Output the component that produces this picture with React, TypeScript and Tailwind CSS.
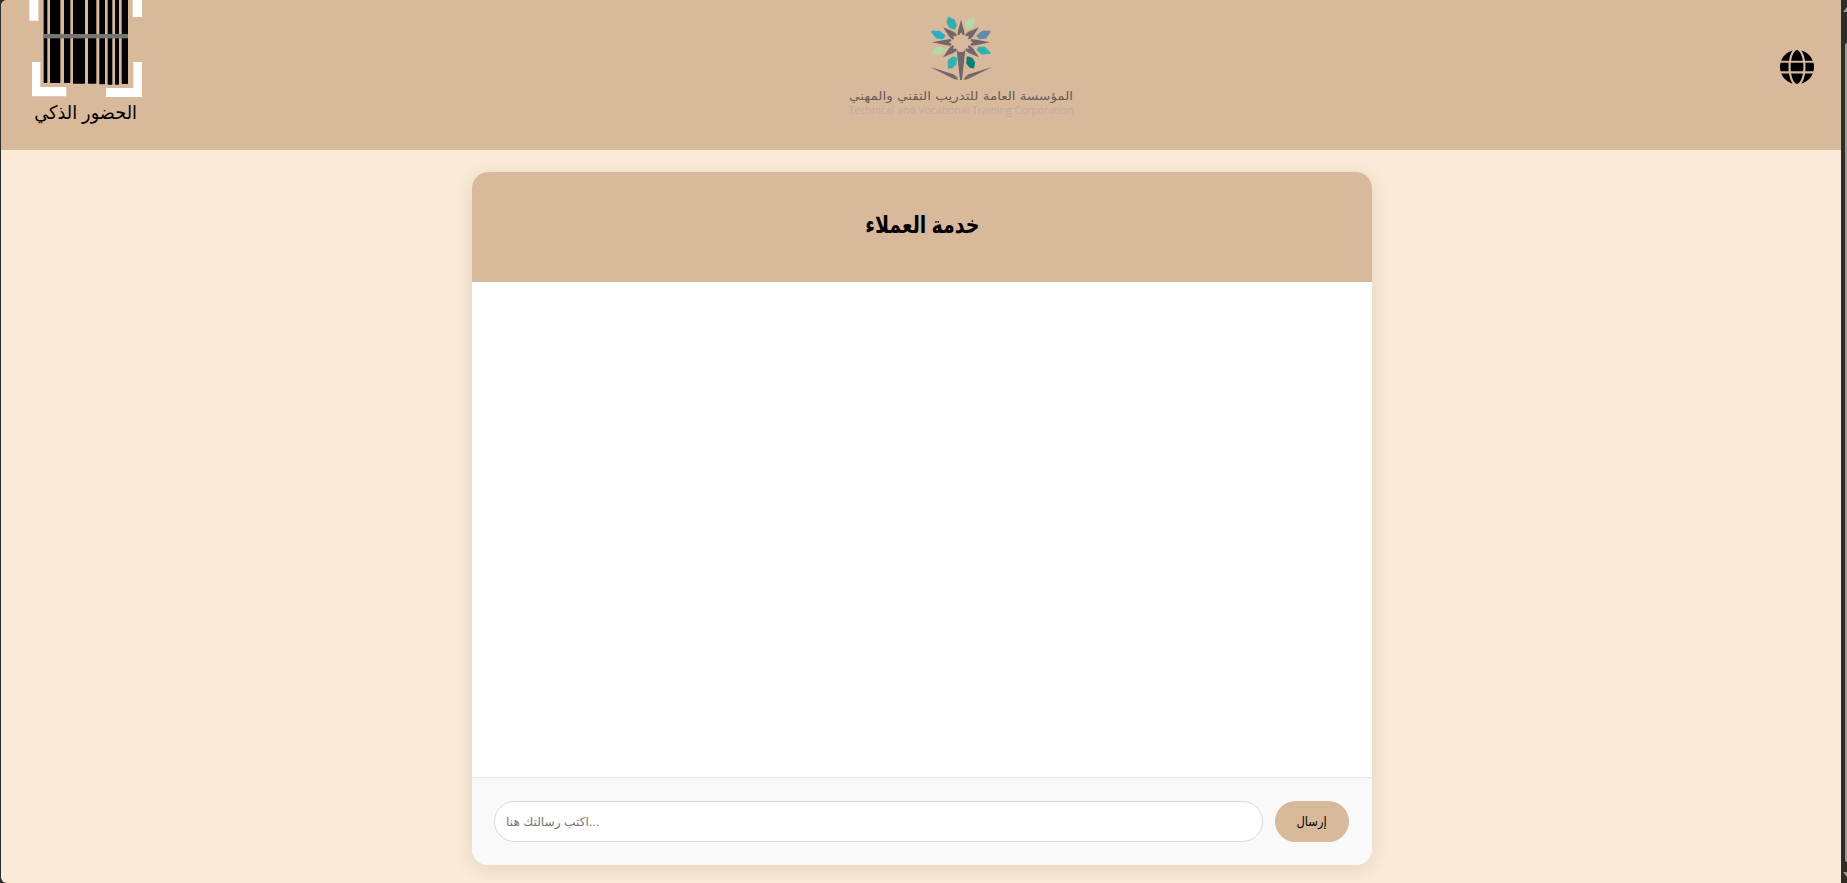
import { FaGlobe } from "react-icons/fa6";

const bars = [
  [131, 11, 249], [150, 31, 249], [192, 19, 249], [219, 36, 251], [264, 25, 251],
  [298, 17, 253], [323, 14, 254], [345, 12, 254], [365, 19, 252],
];

function AttendanceLogo() {
  return (
    <svg className="block h-[150px] w-[200px]" viewBox="0 0 600 450" role="img">
      {bars.map(([x, w, h]) => (
        <rect key={x} x={x} y={-6} width={w} height={h + 6} rx={2} fill="#000" />
      ))}
      <rect x={130} y={102} width={254} height={13} fill="#777574" />
      <g fill="#fff">
        <path d="M88 0h27v62H88zM398 0h28v51h-28z" />
        <path d="M96 186h25v75h78v28H96zM400 186h26v105H318v-27h82z" />
      </g>
      <text
        x={257} y={358} textAnchor="middle" direction="rtl" textLength={308}
        lengthAdjust="spacingAndGlyphs" fontSize={56}
        className="font-['Liberation_Sans','DejaVu_Sans',sans-serif]"
      >
        الحضور الذكي
      </text>
    </svg>
  );
}

function CorporationLogo() {
  return (
    <svg className="block h-[130px] w-[260px]" viewBox="0 0 780 390" role="img">
      <g transform="translate(285 36)" strokeWidth={5} strokeLinejoin="round">
        <path fill="#32b0b0" stroke="#32b0b0" d="M71 17l16 7 6 15-4 11-14-4-8-15z" />
        <path fill="#b5d8a9" stroke="#b5d8a9" d="M145 17l-16 7-6 15 4 11 13-4 7-15z" />
        <path fill="#28aec5" stroke="#28aec5" d="M21 59l22 0 16 13-7 7-17-2z" />
        <path fill="#5d8cae" stroke="#5d8cae" d="M194 59l-22 0-15 13 7 7 18-2z" />
        <path fill="#b5d8a9" stroke="#b5d8a9" d="M21 123l17-16 16 0 5 7-13 11z" />
        <path fill="#2bb2ad" stroke="#2bb2ad" d="M195 123l-17-16-16 0-4 7 13 11z" />
        <path fill="#2fb3b0" stroke="#2fb3b0" d="M71 167l0-22 13-9 9 2-1 18-12 11z" />
        <path fill="#087e78" stroke="#087e78" d="M145 167l3-15-7-12-13-5-2 19 9 11z" />
      </g>
      <g fill="#716768">
        {[0, 90, 270].map((angle) => (
          <path
            key={angle}
            d={
              angle === 0
                ? "M393 59l9 33 2 12-6 1-5-8-5 8-6-1 2-12z"
                : "M393 40l8 40 2 16-5 3-5-8-5 8-5-3 2-16z"
            }
            transform={`rotate(${angle} 393 127)`}
          />
        ))}
        {[50, 130, 230, 310].map((angle) => (
          <path
            key={angle}
            d="M393 57l10 33 0 12-5 2-5-8-5 8-5-2 0-12z"
            transform={`rotate(${angle} 393 127)`}
          />
        ))}
        <path d="M380 149l7 7h12l7-7-5 46-5 45h-6l-5-45z" />
        <path d="M300 201l70 22 11 8 3 9-14-4zM486 201l-70 22-11 8-3 9 14-4z" />
      </g>
      <text
        x={393} y={301} textAnchor="middle" direction="rtl" textLength={672}
        lengthAdjust="spacingAndGlyphs" fontSize={34} fill="#655c57"
        className="font-['DejaVu_Sans',sans-serif]"
      >
        المؤسسة العامة للتدريب التقني والمهني
      </text>
      <text
        x={393} y={343} textAnchor="middle" textLength={674}
        lengthAdjust="spacingAndGlyphs" fontSize={30} fill="#bfab9c"
        className="font-['Open_Sans',sans-serif]"
      >
        Technical and Vocational Training Corporation
      </text>
    </svg>
  );
}

export default function App() {
  return (
    <div className="flex h-[883px] w-full overflow-hidden bg-[#302e2d] pl-px font-['Liberation_Sans','DejaVu_Sans',sans-serif] text-black">
      <div className="flex min-w-0 flex-1 flex-col overflow-hidden rounded-l-[6px] bg-[#faebd7]">
        <header className="flex h-[150px] shrink-0 items-start justify-between bg-[#d8b99c]">
          <div className="-ml-px w-[830px] shrink-0">
            <AttendanceLogo />
          </div>
          <CorporationLogo />
          <div className="flex flex-1 justify-end pt-[50px] pr-[27px]">
            <button aria-label="اللغة">
              <FaGlobe className="size-[34px]" />
            </button>
          </div>
        </header>

        <main className="flex justify-center pt-[22px] pl-[2px]">
          <section className="flex h-[693px] w-[900px] flex-col overflow-hidden rounded-[16px] bg-white shadow-[0_4px_20px_rgba(0,0,0,0.1)]">
            <div className="flex h-[110px] shrink-0 justify-center bg-[#d8b99c] pt-[35px]">
              <h1 dir="rtl" className="scale-x-[0.79] text-[24px] leading-[36px] font-bold">خدمة العملاء</h1>
            </div>
            <div className="flex-1 bg-white" />
            <form
              className="flex h-[88px] shrink-0 items-center gap-3 border-t border-[#e5e5e5] bg-[#f9f9f9] pr-[23px] pl-[22px]"
              onSubmit={(e) => e.preventDefault()}
            >
              <input
                placeholder="اكتب رسالتك هنا..."
                className="h-[41px] min-w-0 flex-1 rounded-full border border-[#d9d9d9] bg-white px-[11px] text-[12.2px] outline-none placeholder:text-[#757575]"
              />
              <button className="h-[41px] w-[74px] rounded-full bg-[#d8b99c] text-[13.33px]">
                <span className="inline-block scale-x-[0.86]">إرسال</span>
              </button>
            </form>
          </section>
        </main>
      </div>
      <div className="flex w-[6px] shrink-0 flex-col items-end overflow-hidden bg-[#2d2c2b]">
        <svg className="h-[43px] w-[4px] shrink-0" viewBox="0 0 4 43">
          <path d="M0 12l4-5v5z" fill="#999" />
        </svg>
        <div className="h-[819px] w-[2px] rounded-l-full bg-[#9b9b9b]" />
        <svg className="h-[21px] w-[4px] shrink-0" viewBox="0 0 4 21">
          <path d="M0 10h4v5z" fill="#999" />
        </svg>
      </div>
    </div>
  );
}
